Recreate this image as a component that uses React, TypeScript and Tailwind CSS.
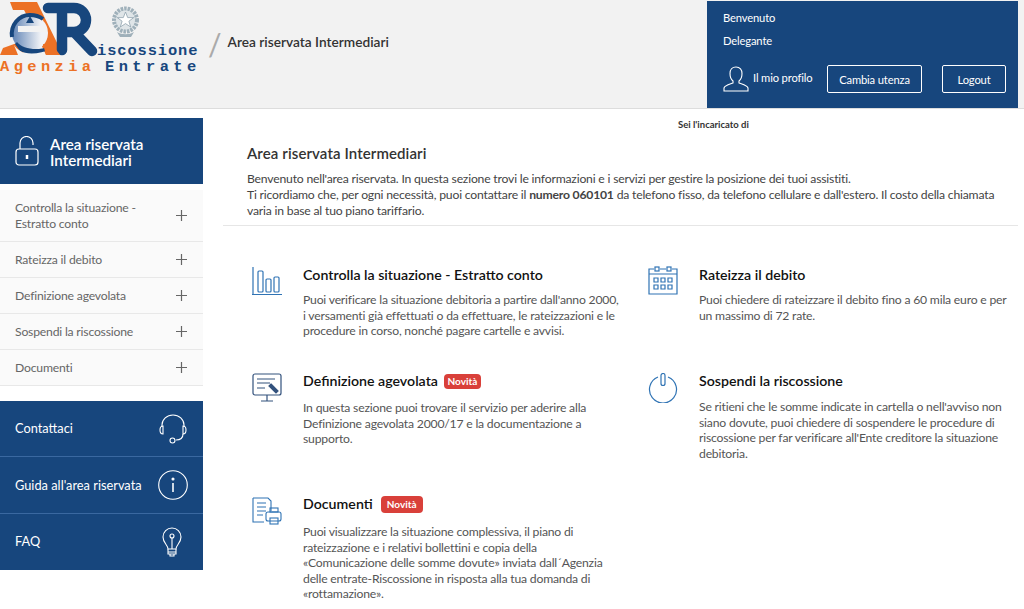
import React from 'react'

const navItems = [
  { label: 'Rateizza il debito' },
  { label: 'Definizione agevolata' },
  { label: 'Sospendi la riscossione' },
  { label: 'Documenti' },
]

function Plus() {
  return (
    <svg width="13" height="13" viewBox="0 0 13 13" className="shrink-0 text-[#666]" stroke="currentColor" strokeWidth="1.2">
      <path d="M6.5 1v11M1 6.5h11" />
    </svg>
  )
}

function Logo() {
  return (
    <div className="relative w-[200px] h-[78px] shrink-0 overflow-hidden">
      <svg width="200" height="78" viewBox="0 0 200 78" className="absolute left-0 top-0">
        <defs>
          <linearGradient id="eg" x1="0" x2="1">
            <stop offset="0" stopColor="#5f83b5" />
            <stop offset="0.8" stopColor="#f0f2f6" />
          </linearGradient>
        </defs>
        {/* orange A */}
        <path d="M10 2h27l26 53H46L32 25 24 10H13z" fill="#ec7125" />
        <path d="M0 55l3-7 14-5 8 12z" fill="#ec7125" />
        {/* e */}
        <circle cx="30" cy="33" r="18" fill="url(#eg)" />
        <path d="M12 37a18 19 0 0 1 18-22c5 0 9 1 13 4" fill="none" stroke="#17467d" strokeWidth="4" />
        <path d="M18 26h28v6H18z" fill="#f2f2f2" />
        <path d="M26 23l4-7 4 7z" fill="#17467d" />
        <path d="M17 42c5 7 20 9 31 5l3 2c-10 5-24 6-31 2l-5-7z" fill="#17467d" />
        <path d="M14 45c3 5 10 9 18 10H18z" fill="#f2f2f2" />
        {/* R */}
        <path d="M48 8h26a12 12 0 0 1 0 24H64M62 8v42M74 32l18 19" fill="none" stroke="#17467d" strokeWidth="10.500" strokeLinecap="round" strokeLinejoin="round" />
        <path d="M43 44h9l8 11H46z" fill="#ec7125" />
        {/* emblem */}
        <circle cx="125.500" cy="20" r="11.500" fill="#dfe5e8" stroke="#9fb0ba" strokeWidth="4" strokeDasharray="2.500 1" />
        <path d="M125.500 12l2.200 5.600h6l-4.800 3.600 1.800 5.800-5.200-3.400-5.200 3.400 1.800-5.800-4.800-3.600h6z" fill="#fff" stroke="#8fa2ad" strokeWidth=".8" />
        <path d="M117 32c5 3 12 3 17 0l-3 5h-11z" fill="#9fb0ba" />
      </svg>
      <span className="absolute left-[97px] top-[41px] font-['Liberation_Mono',monospace] font-bold text-[15.4px] leading-5 tracking-[0.9px] text-[#17467d]">iscossione</span>
      <span className="absolute left-0 top-[57px] font-['Liberation_Mono',monospace] font-bold text-[15.4px] leading-5 tracking-[4.4px] [word-spacing:-4px] text-[#ec7125] whitespace-nowrap">
        Agenzia <span className="text-[#17467d]">Entrate</span>
      </span>
    </div>
  )
}

function Section({
  icon,
  iconClass,
  title,
  badge,
  bodyClass,
  children,
  className,
}: {
  icon: React.ReactNode
  iconClass?: string
  title: string
  badge?: string
  bodyClass?: string
  children: React.ReactNode
  className?: string
}) {
  return (
    <div className={`flex ${className ?? ''}`}>
      <div className={`w-[52px] shrink-0 pl-px ${iconClass ?? ''}`}>{icon}</div>
      <div className="min-w-0">
        <h3 className="flex items-center pt-px text-[14.2px] leading-5 font-semibold text-[#111] whitespace-nowrap">
          {title}
          {badge && <span className={`bg-[#d9403a] text-white text-[10px] font-bold rounded-sm text-center ${badge}`}>Novità</span>}
        </h3>
        <p className={`text-[12.2px] tracking-[-0.2px] leading-[15.5px] text-[#555] ${bodyClass ?? 'mt-[7px]'}`}>{children}</p>
      </div>
    </div>
  )
}

export default function App() {
  return (
    <div className="w-[1024px] h-[609px] overflow-hidden bg-white font-['Lato',sans-serif]">
      <header className="h-[109px] bg-[#f2f2f2] border-b border-[#ddd] flex">
        <Logo />
        <div className="flex items-start pt-[28px] pl-[8px] flex-1">
          <span className="text-[30px] leading-8 text-[#aaa]">/</span>
          <span className="ml-[6px] mt-[6px] text-[13.7px] leading-4 font-semibold text-[#333]">Area riservata Intermediari</span>
        </div>
        <div className="w-[311px] h-[107px] mt-px mr-[6px] bg-[#17467d] text-white text-[11.2px] tracking-[-0.15px] pl-[16px] pt-[9px]">
          <div className="leading-4">Benvenuto</div>
          <div className="leading-4 mt-[7px]">Delegante</div>
          <div className="flex items-center mt-[16px]">
            <svg width="26" height="26" viewBox="0 0 26 26" fill="none" stroke="currentColor" strokeWidth="1.1">
              <path d="M13 1c-4 0-6 3-6 6.500 0 3 1 6 3 7.500v2c-2 1-8 2-9 5v3h24v-3c-1-3-7-4-9-5v-2c2-1.500 3-4.500 3-7.500C19 4 17 1 13 1z" />
            </svg>
            <span className="ml-[4px] w-[74px] -mt-[2px]">Il mio profilo</span>
            <button className="w-[95px] h-[28px] border border-white rounded-[2px] pt-0.5">Cambia utenza</button>
            <button className="w-[64px] h-[28px] ml-5 border border-white rounded-[2px] pt-0.5">Logout</button>
          </div>
        </div>
      </header>

      <div className="flex">
        <aside className="w-[203px] shrink-0 pt-[9px]">
          <div className="h-[66px] bg-[#17467d] text-white flex items-center pl-[15px]">
            <svg width="24" height="30" viewBox="0 0 24 30" fill="none" stroke="currentColor" strokeWidth="1.2">
              <path d="M5 13V7a6.500 6.500 0 0 1 13 0v2" />
              <rect x="1" y="13" width="22" height="16" rx="3" />
              <path d="M12 19v4" strokeWidth="2.500" />
            </svg>
            <span className="ml-[11px] pt-0.5 text-[15.2px] leading-4 font-semibold">Area riservata<br />Intermediari</span>
          </div>
          <nav className="mt-1.5 bg-[#fafafa] text-[12.2px] tracking-[-0.2px] text-[#666]">
            <div className="h-[52px] flex items-center justify-between pl-[15px] pr-[15px] border-b border-[#e8e8e8]">
              <span className="leading-4">Controlla la situazione -<br />Estratto conto</span>
              <Plus />
            </div>
            {navItems.map((item) => (
              <div key={item.label} className="h-9 flex items-center justify-between pl-[15px] pr-[15px] border-b border-[#e8e8e8]">
                <span className="pt-0.5">{item.label}</span>
                <Plus />
              </div>
            ))}
          </nav>
          <div className="mt-[15px] bg-[#17467d] text-white text-[12.8px]">
            <div className="h-[56px] flex items-center justify-between pl-[15px] pr-[15px] border-b border-[#3a68a0]">
              <span>Contattaci</span>
              <svg width="30" height="30" viewBox="0 0 30 30" fill="none" stroke="currentColor" strokeWidth="1.100">
                <path d="M4 13v-2a11 10 0 0 1 22 0v2" />
                <path d="M5 12c-2 0-3 2-3 4s1 4 3 4zM25 12c2 0 3 2 3 4s-1 4-3 4z" />
                <path d="M25 20c0 4-3 6-7 6" />
                <circle cx="14.500" cy="26.500" r="2.500" />
              </svg>
            </div>
            <div className="h-[57px] flex items-center justify-between pl-[15px] pr-[15px] border-b border-[#3a68a0]">
              <span className="pt-0.5">Guida all'area riservata</span>
              <svg width="30" height="30" viewBox="0 0 30 30" fill="none" stroke="currentColor" strokeWidth="1.100">
                <circle cx="15" cy="15" r="14.300" />
                <path d="M15 13v9" strokeWidth="1.600" />
                <circle cx="15" cy="9" r="1" fill="currentColor" />
              </svg>
            </div>
            <div className="h-[56px] flex items-center justify-between pl-[15px] pr-[21px]">
              <span>FAQ</span>
              <svg width="20" height="30" viewBox="0 0 20 30" fill="none" stroke="currentColor" strokeWidth="1.100">
                <path d="M6 22c0-4-5-6-5-12a9 9 0 0 1 18 0c0 6-5 8-5 12z" />
                <path d="M10 22V11" />
                <circle cx="10" cy="9" r="2" />
                <path d="M6 22v5h8v-5M6 25h8M8 27v2h4v-2" />
              </svg>
            </div>
          </div>
        </aside>

        <main className="flex-1 min-w-0">
          <div className="h-[26px] pl-[475px] pt-[10px] text-[9.5px] leading-3 font-bold text-[#333]">Sei l'incaricato di</div>
          <section className="ml-[20px] mr-[6px] pl-[24px] border-b border-[#e6e6e6] h-[91px]">
            <h1 className="pt-[8px] text-[15px] tracking-[0.1px] leading-5 font-semibold text-[#333]">Area riservata Intermediari</h1>
            <p className="mt-[8px] text-[12.2px] tracking-[-0.2px] leading-[15.8px] text-[#444]">
              Benvenuto nell'area riservata. In questa sezione trovi le informazioni e i servizi per gestire la posizione dei tuoi assistiti.<br />
              Ti ricordiamo che, per ogni necessità, puoi contattare il <b>numero 060101</b> da telefono fisso, da telefono cellulare e dall'estero. Il costo della chiamata varia in base al tuo piano tariffario.
            </p>
          </section>
          <div className="grid grid-cols-[396px_1fr] pl-[48px] pt-[38px]">
            <div>
              <Section
                icon={
                  <svg width="30" height="30" viewBox="0 0 30 30" fill="none" stroke="#2f73b4" strokeWidth="1.200">
                    <path d="M1 1v27M0 28.500h30" />
                    <rect x="6" y="5" width="5" height="21" rx="1" />
                    <rect x="14" y="13" width="5" height="13" rx="1" />
                    <rect x="22" y="11" width="5" height="15" rx="1" />
                  </svg>
                }
                iconClass="mt-[2px]"
                title="Controlla la situazione - Estratto conto"
                className="h-[106px] w-[372px]"
              >
                Puoi verificare la situazione debitoria a partire dall'anno 2000, i versamenti già effettuati o da effettuare, le rateizzazioni e le procedure in corso, nonché pagare cartelle e avvisi.
              </Section>
              <Section
                icon={
                  <svg width="30" height="30" viewBox="0 0 30 30" fill="none" stroke="#33527d" strokeWidth="1.200">
                    <rect x="1" y="1" width="28" height="21" rx="2" />
                    <path d="M5 6h18M5 10h13M5 15h8M15 22v6M9 28h12" />
                    <path d="M19 11l7 7-2 2-7-7z" fill="#33527d" />
                  </svg>
                }
                iconClass="mt-[3px]"
                title="Definizione agevolata"
                badge="ml-[6px] w-[37px] leading-[15px]"
                bodyClass="mt-[9px]"
                className="h-[123px] w-[372px]"
              >
                In questa sezione puoi trovare il servizio per aderire alla Definizione agevolata 2000/17 e la documentazione a supporto.
              </Section>
              <Section
                icon={
                  <svg width="30" height="28" viewBox="0 0 30 28" fill="none" stroke="#2f73b4" strokeWidth="1.100">
                    <path d="M1 1h15l3 3v10M1 1v24h11" />
                    <path d="M5 6h9M5 10h9M5 14h9M5 18h6" />
                    <rect x="14" y="15" width="15" height="9" rx="2" />
                    <rect x="18" y="11" width="8" height="4" />
                    <rect x="18" y="21" width="8" height="6" />
                  </svg>
                }
                iconClass="mt-[4px]"
                title="Documenti"
                badge="ml-2 w-[42px] leading-[17px]"
                bodyClass="mt-[10px]"
                className="w-[372px]"
              >
                Puoi visualizzare la situazione complessiva, il piano di rateizzazione e i relativi bollettini e copia della «Comunicazione delle somme dovute» inviata <span className="whitespace-nowrap">dall´Agenzia</span> delle entrate-Riscossione in risposta alla tua domanda di «rottamazione».
              </Section>
            </div>
            <div>
              <Section
                icon={
                  <svg width="30" height="30" viewBox="0 0 30 30" fill="none" stroke="#2f73b4" strokeWidth="1.200">
                    <path d="M6 3H1v25h28V3h-5M12 3h6M1 8h28" />
                    <rect x="7" y="1" width="4" height="4" />
                    <rect x="19" y="1" width="4" height="4" />
                    <path d="M6 12h4v4H6zM13 12h4v4h-4zM20 12h4v4h-4zM6 19h4v4H6zM13 19h4v4h-4zM20 19h4v4h-4z" />
                  </svg>
                }
                iconClass="mt-[2px]"
                title="Rateizza il debito"
                className="h-[106px] w-[360px]"
              >
                Puoi chiedere di rateizzare il debito fino a 60 mila euro e per un massimo di 72 rate.
              </Section>
              <Section
                icon={
                  <svg width="30" height="30" viewBox="0 0 30 30" fill="none" stroke="#2f73b4" strokeWidth="1.200">
                    <path d="M10 4a13.500 13.500 0 1 0 10 0" />
                    <rect x="13" y="0.500" width="4" height="12" rx="2" />
                  </svg>
                }
                iconClass="mt-[3px]"
                title="Sospendi la riscossione"
                bodyClass="mt-[8px]"
                className="w-[360px]"
              >
                Se ritieni che le somme indicate in cartella o nell'avviso non siano dovute, puoi chiedere di sospendere le procedure di riscossione per far verificare all'Ente creditore la situazione debitoria.
              </Section>
            </div>
          </div>
        </main>
      </div>
    </div>
  )
}
